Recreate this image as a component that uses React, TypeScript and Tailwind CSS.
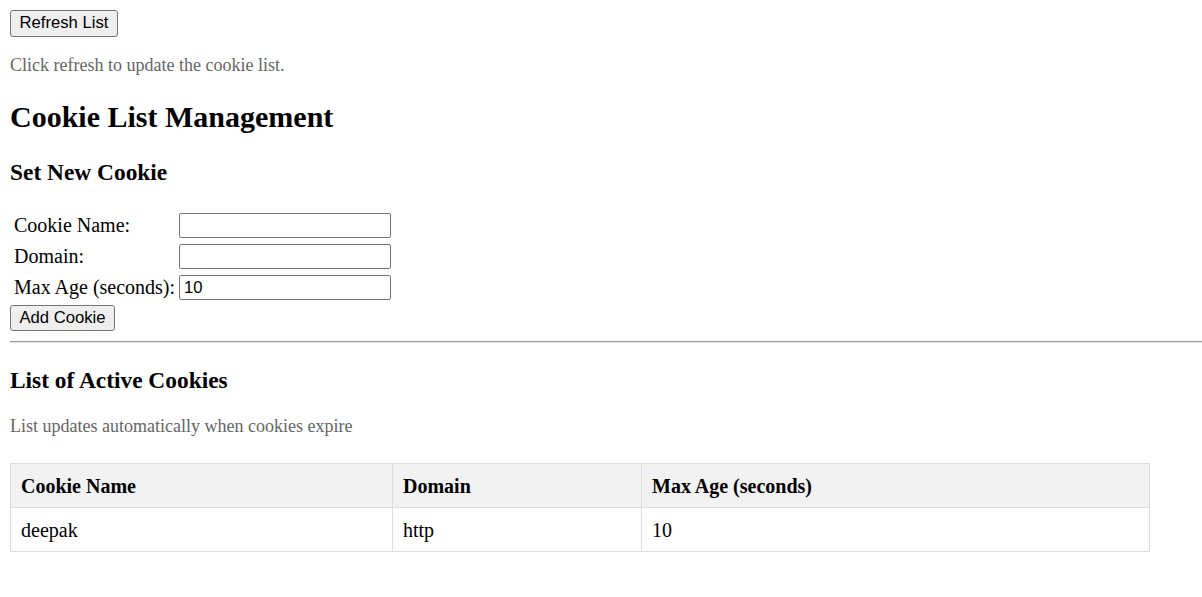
import React, { useState } from 'react';

interface CookieRow {
  name: string;
  domain: string;
  maxAge: number;
}

export default function App() {
  const [name, setName] = useState('');
  const [domain, setDomain] = useState('');
  const [maxAge, setMaxAge] = useState('10');
  const [cookies, setCookies] = useState<CookieRow[]>([
    { name: 'deepak', domain: 'http', maxAge: 10 },
  ]);

  const addCookie = () => {
    if (!name) return;
    setCookies([...cookies, { name, domain, maxAge: Number(maxAge) || 0 }]);
    setName('');
    setDomain('');
  };

  const buttonClass =
    "block bg-[#efefef] border border-[#767676] rounded-[3px] font-['Liberation_Sans',Arial,sans-serif] text-[16.67px] leading-none text-black hover:bg-[#e5e5e5]";
  const inputClass =
    "h-[25px] w-[212px] px-[4px] border border-[#767676] rounded-[2px] font-['Liberation_Sans',Arial,sans-serif] text-[16.67px] text-black outline-none";

  return (
    <div className="min-h-screen bg-white pl-[10px] pt-[10px] font-['Liberation_Serif','Times_New_Roman',serif] text-[20px] text-black">
      {/* Refresh */}
      <button className={`${buttonClass} h-[27px] w-[108px]`}>Refresh List</button>
      <p className="mt-[18px] text-[18px] leading-[21px] text-[#666]">
        Click refresh to update the cookie list.
      </p>

      <h1 className="mt-[23px] text-[30px] font-bold leading-[35px]">Cookie List Management</h1>

      {/* Set new cookie */}
      <h3 className="mt-[25px] text-[23.4px] font-bold leading-[27px]">Set New Cookie</h3>
      <div className="mt-[27px] ml-[4px] grid grid-cols-[165px_212px] gap-y-[6px] items-center">
        <label className="leading-[23px]">Cookie Name:</label>
        <input className={inputClass} value={name} onChange={(e) => setName(e.target.value)} />
        <label className="leading-[23px]">Domain:</label>
        <input className={inputClass} value={domain} onChange={(e) => setDomain(e.target.value)} />
        <label className="leading-[23px]">Max Age (seconds):</label>
        <input className={inputClass} value={maxAge} onChange={(e) => setMaxAge(e.target.value)} />
      </div>
      <button onClick={addCookie} className={`${buttonClass} mt-[5px] h-[26px] w-[105px]`}>
        Add Cookie
      </button>

      <div className="mt-[10px] border-t border-b border-t-[#9a9a9a] border-b-[#e6e6e6]" />

      {/* Active cookies */}
      <h3 className="mt-[24px] text-[23.4px] font-bold leading-[27px]">List of Active Cookies</h3>
      <p className="mt-[22px] text-[18px] leading-[21px] text-[#666]">
        List updates automatically when cookies expire
      </p>

      <table className="mt-[26px] w-[1139px] table-fixed border-collapse border border-[#ddd] text-left">
        <colgroup>
          <col className="w-[382px]" />
          <col className="w-[249px]" />
          <col className="w-[508px]" />
        </colgroup>
        <thead>
          <tr className="bg-[#f2f2f2]">
            <th className="h-[44px] border border-[#ddd] px-[10px] py-0 font-bold">Cookie Name</th>
            <th className="h-[44px] border border-[#ddd] px-[10px] py-0 font-bold">Domain</th>
            <th className="h-[44px] border border-[#ddd] px-[10px] py-0 font-bold">Max Age (seconds)</th>
          </tr>
        </thead>
        <tbody>
          {cookies.map((c) => (
            <tr key={c.name}>
              <td className="h-[44px] border border-[#ddd] px-[10px] py-0">{c.name}</td>
              <td className="h-[44px] border border-[#ddd] px-[10px] py-0">{c.domain}</td>
              <td className="h-[44px] border border-[#ddd] px-[10px] py-0">{c.maxAge}</td>
            </tr>
          ))}
        </tbody>
      </table>
    </div>
  );
}
